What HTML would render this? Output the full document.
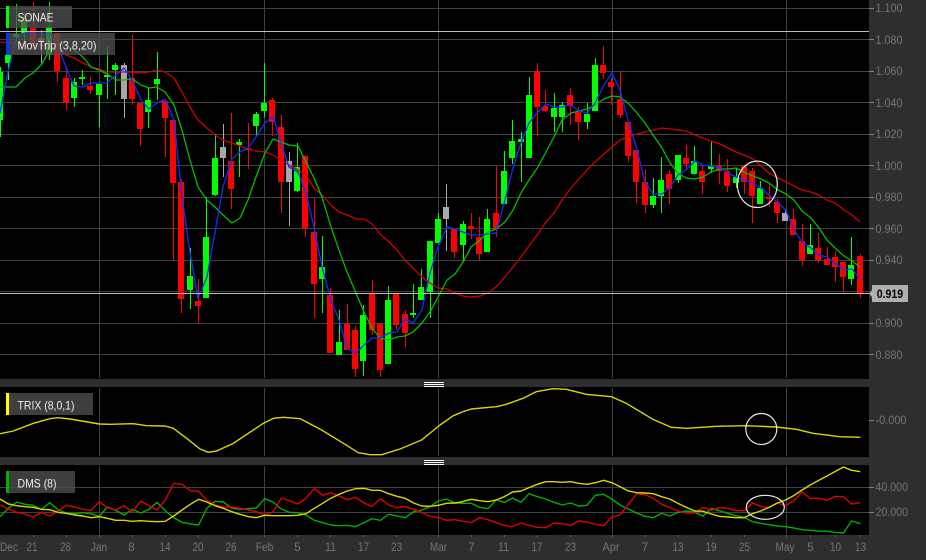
<!DOCTYPE html>
<html>
<head>
<meta charset="utf-8">
<style>
html,body{margin:0;padding:0;background:#2e2e2e;width:926px;height:560px;overflow:hidden}
svg{display:block;font-family:"Liberation Sans",sans-serif}
.ax text{font-size:11.5px;fill:#757575}
.lb{font-size:12px;fill:#eee}
</style>
</head>
<body>
<svg width="926" height="560" viewBox="0 0 926 560">
<rect width="926" height="560" fill="#2e2e2e"/>
<rect x="0" y="0" width="869" height="379" fill="#000"/>
<rect x="0" y="387" width="869" height="70" fill="#000"/>
<rect x="0" y="465" width="869" height="70" fill="#000"/>

<g stroke="#404040" stroke-width="1" shape-rendering="crispEdges" fill="none">
<path d="M0 8.5H869M0 39.5H869M0 71.5H869M0 102.5H869M0 134.5H869M0 165.5H869M0 197.5H869M0 228.5H869M0 260.5H869M0 291.5H869M0 323.5H869M0 354.5H869"/>
<path d="M99.5 0V378M264.5 0V378M438.5 0V378M612.5 0V378M786.5 0V378"/>
<path d="M99.5 388V456M264.5 388V456M438.5 388V456M612.5 388V456M786.5 388V456"/>
<path d="M99.5 466V534M264.5 466V534M438.5 466V534M612.5 466V534M786.5 466V534"/>
<path d="M0 487.5H869M0 512.5H869"/>
</g>

<!-- wicks -->
<g fill="none" stroke-width="1" shape-rendering="crispEdges">
<path stroke="#00ff00" d="M0.5 67V137M8.5 33V80M16.5 4V42M24.5 13V42M49.5 2V60M74.5 78V107M82.5 70V85M99.5 84V127M107.5 46V99M115.5 63V95M148.5 88V128M157.5 52V100M190.5 248V309M206.5 197V298M215.5 134V196M239.5 139V177M256.5 112V137M264.5 63V117M297.5 143V192M322.5 236V313M339.5 310V355M363.5 305V376M388.5 286V364M413.5 284V318M421.5 269V300M430.5 241V318M438.5 213V243M463.5 221V262M487.5 209V252M504.5 151V204M512.5 120V164M521.5 132V182M529.5 77V158M554.5 93V132M562.5 102V132M587.5 103V129M595.5 58V111M653.5 178V208M661.5 157V213M678.5 155V183M694.5 146V174M711.5 141V173M736.5 169V188M760.5 181V204M810.5 224V254M851.5 237V285"/>
<path stroke="#ff0000" d="M33.5 2V50M57.5 33V82M66.5 66V110M90.5 77V94M132.5 35V105M140.5 103V146M165.5 100V157M173.5 120V261M181.5 179V313M198.5 279V323M231.5 113V209M248.5 123V169M272.5 98V136M281.5 115V213M305.5 155V237M314.5 198V318M330.5 288V353M347.5 304V350M355.5 326V377M372.5 280V335M380.5 323V377M396.5 294V330M405.5 310V347M454.5 229V258M471.5 213V239M479.5 217V260M496.5 166V237M537.5 63V136M545.5 90V112M570.5 88V125M578.5 107V140M603.5 46V79M611.5 78V105M620.5 72V118M628.5 122V162M636.5 150V203M645.5 169V213M669.5 170V204M686.5 145V169M702.5 166V194M719.5 154V184M727.5 159V192M744.5 165V194M752.5 168V223M769.5 183V207M777.5 199V223M793.5 209V235M802.5 224V266M818.5 233V263M827.5 247V265M835.5 251V282M843.5 262V292M860.5 254V298"/>
<path stroke="#a8a8a8" d="M41.5 30V63M124.5 63V118M223.5 124V177M289.5 152V226M446.5 184V251M785.5 210V221"/>
</g>
<!-- bodies -->
<g fill="none" stroke-width="6" shape-rendering="crispEdges" transform="translate(-.5 0)">
<path stroke="#00ff00" d="M0.5 72V120M8.5 55V63M16.5 34V37M24.5 20V33M49.5 27V55M74.5 82V98M82.5 77V79M99.5 84V95M107.5 75V77M115.5 65V70M148.5 100V112M157.5 79V84M190.5 276V290M206.5 237V298M215.5 158V195M239.5 142V145M256.5 114V126M264.5 103V111M297.5 167V191M322.5 267V279M339.5 342V355M363.5 315V361M388.5 300V364M413.5 313V315M421.5 287V300M430.5 241V292M438.5 219V243M463.5 224V245M487.5 219V252M504.5 171V204M512.5 141V158M521.5 139V142M529.5 95V158M554.5 108V117M562.5 105V117M587.5 114V122M595.5 65V111M653.5 196V205M661.5 180V196M678.5 155V180M694.5 161V174M711.5 166V169M736.5 177V183M760.5 188V204M810.5 245V254M851.5 265V279"/>
<path stroke="#ff0000" d="M33.5 28V43M57.5 33V71M66.5 78V103M90.5 86V90M132.5 78V99M140.5 103V129M165.5 101V118M173.5 120V183M181.5 182V299M198.5 301V306M231.5 161V189M248.5 148V150M272.5 100V122M281.5 127V182M305.5 156V228M314.5 232V284M330.5 295V353M347.5 324V350M355.5 330V369M372.5 294V330M380.5 324V370M396.5 294V325M405.5 314V333M454.5 229V252M471.5 226V229M479.5 237V254M496.5 213V229M537.5 71V107M545.5 106V111M570.5 95V106M578.5 112V122M603.5 65V73M611.5 82V87M620.5 99V115M628.5 122V156M636.5 150V182M645.5 182V205M669.5 174V189M686.5 158V164M702.5 171V182M719.5 166V171M727.5 171V186M744.5 166V182M752.5 171V196M769.5 197V199M777.5 202V213M793.5 219V235M802.5 241V260M818.5 248V260M827.5 259V265M835.5 257V267M843.5 262V277M860.5 256V293"/>
<path stroke="#a8a8a8" d="M41.5 38V42M124.5 65V99M223.5 147V158M289.5 161V182M446.5 207V219M785.5 213V221"/>
</g>

<!-- main averages -->
<g fill="none" stroke-width="1.3" stroke-linejoin="round">
<polyline stroke="#d00000" points="0,42 8,43 16,44 25,44 33,44 41,45 50,46 58,50 66,55 74,58 83,63 91,67 99,69 107,72 116,72 124,72 132,72 141,73 149,72 157,70 165,72 174,78 182,92 190,107 198,120 207,128 215,135 223,140 232,143 240,146 248,149 256,151 265,152 273,155 281,160 289,165 298,170 306,175 314,188 322,195 331,205 339,212 347,215 356,219 364,219 372,224 380,234 389,242 397,250 405,260 413,268 422,277 430,283 438,288 447,289 455,293 463,296 471,297 480,296 488,293 496,287 505,277 513,267 521,257 529,246 538,234 546,222 554,213 562,200 571,188 579,179 587,170 595,162 604,154 612,147 620,140 628,137 637,134 645,132 653,130 662,128 670,129 678,130 686,131 695,135 703,138 711,141 720,144 728,148 736,152 744,155 753,159 761,166 769,173 778,178 786,182 794,186 802,190 811,192 819,195 827,200 835,203 844,210 852,215 860,222"/>
<polyline stroke="#00c000" points="0,87 8,87 16,87 25,78 33,73 41,65 50,50 58,44 66,45 74,50 83,57 91,67 99,70 107,74 116,80 124,80 132,79 141,85 149,88 157,87 165,92 174,105 182,130 190,160 198,187 207,200 215,207 223,215 232,223 240,218 248,200 256,177 265,153 273,139 281,142 289,145 298,146 306,162 314,178 322,197 331,227 339,250 347,272 356,293 364,312 372,328 380,338 389,340 397,337 405,336 413,332 422,323 430,312 438,297 447,280 455,274 463,262 471,247 480,240 488,232 496,229 505,222 513,210 521,193 529,180 538,167 546,152 554,137 562,120 571,113 579,111 587,109 595,105 604,99 612,96 620,97 628,103 637,113 645,123 653,135 662,148 670,163 678,173 686,178 695,179 703,177 711,172 720,169 728,169 736,168 744,172 753,176 761,179 769,183 778,190 786,194 794,200 802,211 811,218 819,228 827,240 835,248 844,256 852,261 860,267"/>
<polyline stroke="#0a32ff" points="0,113 8,72 16,40 25,33 33,32 41,32 50,32 58,47 66,67 74,86 83,87 91,83 99,83 107,83 116,75 124,68 132,80 141,100 149,109 157,103 165,99 174,120 182,196 190,253 198,298 207,277 215,232 223,187 232,159 240,152 248,148 256,137 265,123 273,116 281,143 289,167 298,172 306,193 314,227 322,267 331,300 339,320 347,348 356,353 364,345 372,338 380,338 389,333 397,332 405,319 413,323 422,310 430,273 438,247 447,227 455,229 463,232 471,235 480,235 488,234 496,233 505,200 513,168 521,143 529,123 538,112 546,104 554,107 562,107 571,105 579,111 587,113 595,103 604,85 612,73 620,90 628,120 637,150 645,182 653,194 662,194 670,187 678,175 686,170 695,161 703,165 711,166 720,168 728,173 736,177 744,180 753,183 761,188 769,195 778,203 786,210 794,230 802,242 811,248 819,255 827,257 835,263 844,270 852,269 860,279"/>
</g>

<!-- price lines -->
<g stroke="#bdbdbd" stroke-width="1" shape-rendering="crispEdges">
<path d="M0 31.5H869M0 293.5H869"/>
</g>

<!-- TRIX -->
<g transform="translate(0 375) scale(.33333)" fill="none" stroke="#d8d800" stroke-width="4.2" stroke-linejoin="round">
<polyline points="0,176 40,168 100,145 150,131 175,128 210,132 298,147 330,148 400,146 440,152 495,153 520,160 560,190 600,222 625,232 650,228 700,205 790,145 820,130 850,127 900,131 965,165 1030,205 1075,233 1110,239 1145,239 1200,222 1265,195 1320,150 1360,122 1389,110"/>
</g>
<g transform="translate(463 375) scale(.33333)" fill="none" stroke="#d8d800" stroke-width="4.2" stroke-linejoin="round">
<polyline points="0,110 25,102 100,95 130,88 180,70 220,50 270,41 310,43 370,58 445,65 490,85 570,133 625,157 670,160 760,154 850,152 940,156 1000,163 1050,175 1130,185 1192,187"/>
</g>

<!-- DMS -->
<g transform="translate(0 375) scale(.33333)" fill="none" stroke-width="4.2" stroke-linejoin="round">
<polyline stroke="#00b000" points="0,425 25,400 50,381 75,388 99,391 124,403 149,383 174,404 198,414 223,416 248,413 273,416 298,424 322,396 347,406 372,420 397,403 422,414 446,404 471,382 496,407 521,428 546,442 571,447 596,450 620,401 645,379 670,381 695,399 720,403 745,401 769,399 794,371 819,381 844,402 868,412 893,413 918,420 943,436 968,443 992,450 1017,452 1042,451 1067,455 1092,443 1116,431 1141,436 1166,418 1191,423 1216,428 1241,410 1265,405 1290,395 1315,378 1340,372 1365,384 1389,385"/>
<polyline stroke="#e00000" points="0,390 25,402 50,412 75,417 99,426 124,412 149,423 174,408 198,391 223,396 248,402 273,407 298,380 322,398 347,405 372,392 397,412 422,378 446,392 471,405 496,375 521,325 546,328 571,347 596,349 620,375 645,390 670,396 695,396 720,400 745,405 769,410 794,420 819,411 844,369 868,377 893,387 918,370 943,340 968,361 992,353 1017,363 1042,374 1067,367 1092,384 1116,394 1141,371 1166,390 1191,398 1216,395 1241,403 1265,412 1290,424 1315,428 1340,436 1365,434 1389,439"/>
<polyline stroke="#d8d800" points="0,372 25,387 50,392 75,395 99,397 124,403 149,404 174,412 198,415 223,420 248,423 273,428 298,425 322,430 347,436 372,436 397,439 422,437 446,439 471,440 496,439 521,423 546,405 571,388 596,373 620,381 645,392 670,400 695,410 720,418 745,425 769,428 794,421 819,422 844,422 868,422 893,421 918,416 943,400 968,385 992,370 1017,358 1042,348 1067,341 1092,340 1116,346 1141,346 1166,356 1191,364 1216,370 1241,384 1265,393 1290,394 1315,391 1340,385 1365,384 1389,380"/>
</g>
<g transform="translate(463 375) scale(.33333)" fill="none" stroke-width="4.2" stroke-linejoin="round">
<polyline stroke="#00b000" points="0,385 25,385 50,397 75,401 99,375 124,382 149,369 174,382 198,356 223,365 248,372 273,382 298,390 323,384 347,393 372,391 397,361 422,358 446,372 471,390 496,402 521,414 546,424 571,428 596,415 620,423 645,412 670,408 695,412 720,423 745,400 769,407 794,415 819,422 844,427 868,440 893,445 918,449 943,453 968,455 992,459 1017,464 1042,466 1067,468 1092,469 1116,472 1141,474 1166,438 1192,446"/>
<polyline stroke="#e00000" points="0,439 25,442 50,428 75,434 99,443 124,451 149,455 174,444 198,451 223,457 248,458 273,444 298,446 323,451 347,438 372,441 397,448 422,452 446,426 471,420 496,388 521,356 546,359 571,370 596,388 620,398 645,408 670,414 695,414 720,397 745,406 769,398 794,400 819,407 844,407 868,384 893,394 918,398 943,384 968,392 992,378 1017,351 1042,370 1067,370 1092,376 1116,364 1141,365 1166,387 1192,383"/>
<polyline stroke="#d8d800" points="0,379 25,373 50,377 75,380 99,375 124,365 149,351 174,348 198,338 223,328 248,320 273,320 298,322 323,320 347,325 372,328 397,323 422,316 446,323 471,335 496,348 521,353 546,354 571,356 596,365 620,372 645,385 670,397 695,408 720,409 745,417 769,424 794,426 819,428 844,428 868,416 893,408 918,397 943,384 968,375 992,362 1017,345 1042,330 1067,316 1092,303 1116,290 1141,276 1166,286 1192,290"/>
</g>

<!-- circles -->
<g fill="none" stroke="#e8e8e8" stroke-width="1.2">
<ellipse cx="757.3" cy="184.3" rx="20" ry="23.2"/>
<ellipse cx="761.3" cy="429" rx="15.5" ry="15.5"/>
<ellipse cx="765.3" cy="507.3" rx="19" ry="12"/>
</g>

<!-- separator grips -->
<g stroke="#fff" stroke-width="1" shape-rendering="crispEdges">
<path d="M424 382.5H444M424 384.5H444M424 386.5H444"/>
<path d="M424 460.5H444M424 462.5H444M424 464.5H444"/>
</g>

<!-- legend boxes -->
<rect x="6" y="6" width="66" height="22" fill="#505050" fill-opacity=".78"/>
<rect x="6" y="6" width="3" height="22" fill="#00ff00"/>
<text class="lb" x="17.5" y="21.5" textLength="36" lengthAdjust="spacingAndGlyphs">SONAE</text>
<rect x="6" y="33" width="109" height="22" fill="#505050" fill-opacity=".78"/>
<rect x="6" y="33" width="3" height="22" fill="#0a32ff"/>
<text class="lb" x="17.5" y="49.5" textLength="79" lengthAdjust="spacingAndGlyphs">MovTrip (3,8,20)</text>
<rect x="6" y="393" width="87" height="22" fill="#505050" fill-opacity=".78"/>
<rect x="6" y="393" width="3" height="22" fill="#ffff00"/>
<text class="lb" x="17.5" y="409.5" textLength="57" lengthAdjust="spacingAndGlyphs">TRIX (8,0,1)</text>
<rect x="6" y="471" width="69" height="22" fill="#505050" fill-opacity=".78"/>
<rect x="6" y="471" width="3" height="22" fill="#00b000"/>
<text class="lb" x="17.5" y="487.5" textLength="39" lengthAdjust="spacingAndGlyphs">DMS (8)</text>

<!-- right axis -->
<g stroke="#808080" stroke-width="1" shape-rendering="crispEdges">
<path d="M869 8.5h5M869 39.5h5M869 71.5h5M869 102.5h5M869 134.5h5M869 165.5h5M869 197.5h5M869 228.5h5M869 260.5h5M869 323.5h5M869 354.5h5M869 420.5h5M869 487.5h5M869 512.5h5"/>
</g>
<g class="ax" lengthAdjust="spacingAndGlyphs">
<text x="875.5" y="12" textLength="27" lengthAdjust="spacingAndGlyphs">1.100</text>
<text x="875.5" y="44" textLength="27" lengthAdjust="spacingAndGlyphs">1.080</text>
<text x="875.5" y="75" textLength="27" lengthAdjust="spacingAndGlyphs">1.060</text>
<text x="875.5" y="107" textLength="27" lengthAdjust="spacingAndGlyphs">1.040</text>
<text x="875.5" y="138" textLength="27" lengthAdjust="spacingAndGlyphs">1.020</text>
<text x="875.5" y="170" textLength="27" lengthAdjust="spacingAndGlyphs">1.000</text>
<text x="875.5" y="201" textLength="27" lengthAdjust="spacingAndGlyphs">0.980</text>
<text x="875.5" y="233" textLength="27" lengthAdjust="spacingAndGlyphs">0.960</text>
<text x="875.5" y="264" textLength="27" lengthAdjust="spacingAndGlyphs">0.940</text>
<text x="875.5" y="327" textLength="27" lengthAdjust="spacingAndGlyphs">0.900</text>
<text x="875.5" y="359" textLength="27" lengthAdjust="spacingAndGlyphs">0.880</text>
<text x="875.5" y="424" textLength="31" lengthAdjust="spacingAndGlyphs">-0.000</text>
<text x="875.5" y="491" textLength="32.5" lengthAdjust="spacingAndGlyphs">40.000</text>
<text x="875.5" y="516" textLength="32.5" lengthAdjust="spacingAndGlyphs">20.000</text>
</g>

<!-- price tag -->
<polygon points="869,293.5 872,290 872,297" fill="#b0b0b0"/>
<rect x="872" y="285" width="36" height="17" fill="#b0b0b0"/>
<text x="876.7" y="298" textLength="26.5" lengthAdjust="spacingAndGlyphs" font-size="12" font-weight="bold" fill="#000">0.919</text>

<!-- bottom axis -->
<g stroke="#606060" stroke-width="1" shape-rendering="crispEdges">
<path d="M33.5 535v2M66.5 535v2M99.5 535v2M132.5 535v2M165.5 535v2M198.5 535v2M231.5 535v2M264.5 535v2M297.5 535v2M330.5 535v2M363.5 535v2M396.5 535v2M438.5 535v2M471.5 535v2M504.5 535v2M537.5 535v2M570.5 535v2M612.5 535v2M645.5 535v2M678.5 535v2M711.5 535v2M744.5 535v2M786.5 535v2M810.5 535v2M835.5 535v2M860.5 535v2"/>
</g>
<g class="ax" text-anchor="middle">
<text x="9" y="551" textLength="18" lengthAdjust="spacingAndGlyphs">Dec</text>
<text x="32" y="551" textLength="11" lengthAdjust="spacingAndGlyphs">21</text>
<text x="65.5" y="551" textLength="11" lengthAdjust="spacingAndGlyphs">28</text>
<text x="99" y="551" textLength="16.5" lengthAdjust="spacingAndGlyphs">Jan</text>
<text x="131.5" y="551">8</text>
<text x="165" y="551" textLength="11" lengthAdjust="spacingAndGlyphs">14</text>
<text x="198" y="551" textLength="11" lengthAdjust="spacingAndGlyphs">20</text>
<text x="231" y="551" textLength="11" lengthAdjust="spacingAndGlyphs">26</text>
<text x="264.5" y="551" textLength="17.5" lengthAdjust="spacingAndGlyphs">Feb</text>
<text x="297.5" y="551">5</text>
<text x="330.5" y="551" textLength="11" lengthAdjust="spacingAndGlyphs">11</text>
<text x="363.5" y="551" textLength="11" lengthAdjust="spacingAndGlyphs">17</text>
<text x="396.5" y="551" textLength="11" lengthAdjust="spacingAndGlyphs">23</text>
<text x="438.5" y="551" textLength="17" lengthAdjust="spacingAndGlyphs">Mar</text>
<text x="471.5" y="551">7</text>
<text x="503.5" y="551" textLength="11" lengthAdjust="spacingAndGlyphs">11</text>
<text x="537" y="551" textLength="11" lengthAdjust="spacingAndGlyphs">17</text>
<text x="570.5" y="551" textLength="11" lengthAdjust="spacingAndGlyphs">23</text>
<text x="611" y="551" textLength="17" lengthAdjust="spacingAndGlyphs">Apr</text>
<text x="645" y="551">7</text>
<text x="678" y="551" textLength="11" lengthAdjust="spacingAndGlyphs">13</text>
<text x="711" y="551" textLength="11" lengthAdjust="spacingAndGlyphs">19</text>
<text x="744.5" y="551" textLength="11" lengthAdjust="spacingAndGlyphs">25</text>
<text x="785" y="551" textLength="19" lengthAdjust="spacingAndGlyphs">May</text>
<text x="810.5" y="551">5</text>
<text x="835.5" y="551" textLength="11" lengthAdjust="spacingAndGlyphs">10</text>
<text x="860.5" y="551" textLength="11" lengthAdjust="spacingAndGlyphs">13</text>
</g>
</svg>
</body>
</html>
